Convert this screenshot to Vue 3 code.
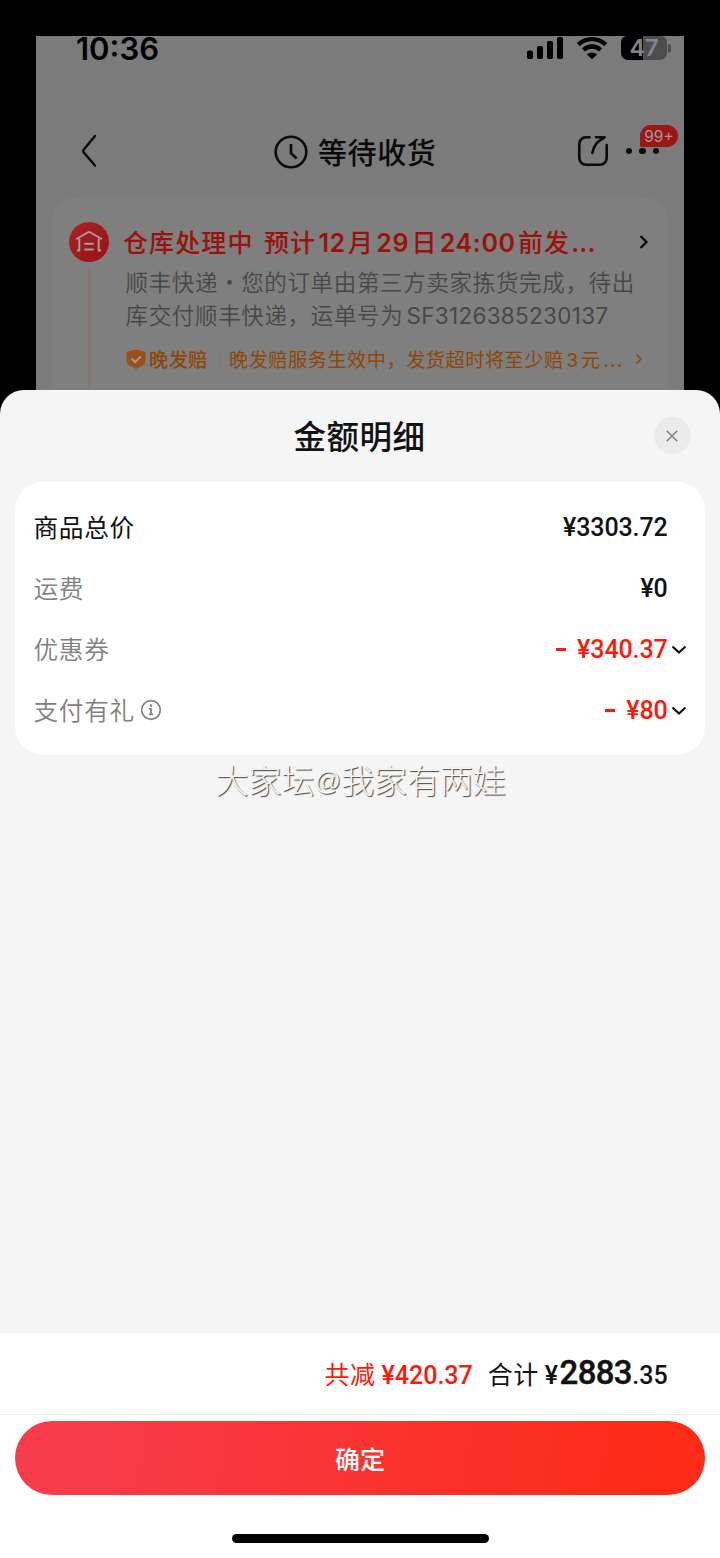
<script setup>
const rows = [
  { label: '商品总价', amount: '¥3303.72', strong: true },
  { label: '运费', amount: '¥0' },
  { label: '优惠券', amount: '¥340.37', minus: true },
  { label: '支付有礼', amount: '¥80', minus: true, info: true },
]
</script>

<template>
  <div class="screen">
    <section class="order">
      <div class="status">
        <span class="time">10:36</span>
        <svg class="signal" width="37" height="24" viewBox="0 0 37 24">
          <rect x="0" y="14.500" width="6" height="8.500" rx="1.800" />
          <rect x="10" y="10" width="6" height="13" rx="1.800" />
          <rect x="20" y="5" width="6" height="18" rx="1.800" />
          <rect x="30" y="1" width="6" height="22" rx="1.800" />
        </svg>
        <svg class="wifi" width="32" height="24" viewBox="0 0 32 24">
          <path d="M2.200 8.600a20 20 0 0 1 27.600 0" />
          <path d="M7.400 14a12.500 12.500 0 0 1 17.200 0" />
          <path class="fill" d="M16 23.200l-5.100-4.800a7.600 7.600 0 0 1 10.200 0z" />
        </svg>
        <div class="battery"><span>47</span></div>
        <i class="cap"></i>
      </div>

      <div class="nav">
        <svg class="back" width="18" height="34" viewBox="0 0 18 34">
          <path d="M15 2L3.600 15.800a2 2 0 0 0 0 2.400L15 31.500" />
        </svg>
        <svg class="clock" width="36" height="36" viewBox="0 0 36 36">
          <circle cx="18" cy="18" r="15.300" />
          <path d="M18 10v9.300l5.600 5.200" />
        </svg>
        <h1>等待收货</h1>
        <svg class="share" width="32" height="32" viewBox="0 0 32 32">
          <path d="M12.500 2.300H9a6.700 6.700 0 0 0-6.700 6.700v14A6.700 6.700 0 0 0 9 29.700h14a6.700 6.700 0 0 0 6.700-6.700V10" />
          <path d="M19 2.300h8.500C20.500 6.500 17 9.500 15.300 18" />
        </svg>
        <div class="more">
          <i></i><i></i><i></i>
          <b>99+</b>
        </div>
      </div>

      <div class="card">
        <div class="rail">
          <svg width="40" height="40" viewBox="0 0 40 40">
            <defs>
              <linearGradient id="disc" x1="0" y1="0" x2="1" y2="1">
                <stop offset="0" stop-color="#a8222a" />
                <stop offset="1" stop-color="#981411" />
              </linearGradient>
            </defs>
            <circle cx="20" cy="20" r="20" fill="url(#disc)" />
            <path d="M7 17.300L19 10.300q1-.6 2 0l12 7M8 28.500h2.300V16.500M32 28.500h-2.300V16.500M15.300 21.800h9.400M15.300 27.500h9.400" fill="none" stroke="#aa9c9c" stroke-width="1.900" />
          </svg>
          <i></i>
        </div>
        <div class="info">
          <div class="headline">
            <span class="state">仓库处理中</span>
            <span class="eta">预计<em>12</em>月<em>29</em>日<em>24:00</em>前发<em class="tail">...</em></span>
            <svg width="10" height="16" viewBox="0 0 10 16"><path d="M1.500 2l6 6-6 6" /></svg>
          </div>
          <p class="desc">顺丰快递<i class="dot">·</i>您的订单由第三方卖家拣货完成，待出<br>库交付顺丰快递，运单号为<em>SF3126385230137</em></p>
          <div class="promise">
            <svg width="20" height="20" viewBox="0 0 20 20">
              <path d="M10 .3l8.300 2.500q1.200.5 1.200 1.700V11q0 4-4.500 6.600L11 19.600q-1 .5-2 0l-4-2Q.5 15 .5 11V4.500q0-1.200 1.200-1.700z" fill="#985018" />
              <path d="M5.800 9.800l3.300 3.300 5.700-5.700" fill="none" stroke="#a69c92" stroke-width="2" />
            </svg>
            <strong>晚发赔</strong>
            <i></i>
            <span>晚发赔服务生效中，发货超时将至少赔<em>3</em>元<em class="tail">...</em></span>
            <svg class="go" width="8" height="12" viewBox="0 0 8 12"><path d="M1.500 1.500L6 6l-4.500 4.500" /></svg>
          </div>
        </div>
      </div>
    </section>

    <section class="sheet">
      <header>
        <h2>金额明细</h2>
        <button class="close" aria-label="关闭">
          <svg width="12" height="12" viewBox="0 0 12 12"><path d="M.7.7l10.600 10.600M11.300.7L.7 11.300" /></svg>
        </button>
      </header>

      <div class="panel">
        <div v-for="row in rows" :key="row.label" class="row" :class="{ strong: row.strong, minus: row.minus }">
          <span class="label">{{ row.label }}</span>
          <svg v-if="row.info" class="tip" width="22" height="22" viewBox="0 0 22 22">
            <circle cx="11" cy="11" r="9.300" />
            <path d="M9 9.800h2v5.500M8.900 15.400h4.300" />
            <circle class="fill" cx="11" cy="6.600" r="1.300" />
          </svg>
          <span class="amount"><i v-if="row.minus"></i>{{ row.amount }}</span>
          <span class="fold">
            <svg v-if="row.minus" width="16" height="10" viewBox="0 0 16 10"><path d="M1.500 1.500l6.500 6 6.500-6" /></svg>
          </span>
        </div>
      </div>

      <div class="watermark">大家坛<em>@</em>我家有两娃</div>

      <footer>
        <div class="total">
          <span class="cn saved">共减</span>
          <span class="num saved">¥420.37</span>
          <span class="cn sum">合计</span>
          <span class="num">¥<b>2883</b>.35</span>
        </div>
        <div class="action">
          <button class="confirm">确定</button>
          <div class="home"></div>
        </div>
      </footer>
    </section>
  </div>
</template>

<style>
body { margin: 0; background: #000; }
</style>

<style scoped>
.screen {
  width: 720px;
  height: 1558px;
  box-sizing: border-box;
  padding-top: 36px;
  background: #000;
  overflow: hidden;
  font-family: "Noto Sans CJK SC", sans-serif;
  display: flex;
  flex-direction: column;
}
svg { display: block; flex: none; }
em, i { font-style: normal; }
button { border: 0; padding: 0; font: inherit; }

.order {
  height: 353.500px;
  margin: 0 36px;
  background: #7b7b7b;
  flex: none;
}
.status { display: flex; align-items: flex-start; height: 81px; }
.time {
  width: 491px;
  box-sizing: border-box;
  padding-left: 40px;
  font: 600 31px/25px Inter, sans-serif;
}
.wifi { margin-left: 12px; fill: none; stroke: #000; stroke-width: 4.400; }
.wifi .fill { fill: #000; stroke: none; }
.battery {
  width: 46px;
  height: 24px;
  margin-left: 13px;
  border-radius: 6px 6px 7px 7px;
  background: linear-gradient(90deg, #000 47%, #4d4d4d 47%);
  color: #858585;
  text-align: center;
  font: 600 23.500px/24px Inter, sans-serif;
}
.cap { width: 3px; height: 9px; margin: 8px 0 0 1px; background: #4d4d4d; border-radius: 0 3px 3px 0; }

.nav { display: flex; align-items: center; height: 68px; }
.back { margin-left: 43.500px; fill: none; stroke: #0b0b0d; stroke-width: 2.500; stroke-linecap: round; }
.clock { margin: 2px 0 0 175.500px; fill: none; stroke: #0b0b0d; stroke-width: 2.600; }
.nav h1 { margin: 0 0 0 9px; width: 259px; font-size: 29px; font-weight: 500; letter-spacing: .6px; line-height: 40px; color: #0b0b0d; white-space: nowrap; }
.share { fill: none; stroke: #0b0b0d; stroke-width: 2.600; stroke-linejoin: round; stroke-linecap: round; }
.more { position: relative; display: flex; gap: 7px; margin-left: 17px; }
.more i { width: 6.300px; height: 6.300px; border-radius: 50%; background: #0b0b0d; }
.more b {
  position: absolute;
  left: 14px;
  top: -23px;
  width: 38px;
  height: 22px;
  border-radius: 11px 11px 11px 2px;
  background: #9c1713;
  color: #a39a9a;
  font: 400 15.500px/23px Inter, sans-serif;
  text-align: center;
}

.card {
  display: flex;
  margin: 12px 16px 0;
  height: 192.500px;
  border-radius: 24px 24px 0 0;
  background: #7f7f7f;
}
.rail { width: 40px; margin: 25px 0 0 17px; display: flex; flex-direction: column; align-items: center; gap: 7px; }
.rail i { width: 1.500px; flex: 1; background: #8b736d; }
.info { margin: 28px 0 0 14px; flex: 1; white-space: nowrap; }
.headline { display: flex; align-items: center; height: 34px; margin-top: -1px; color: #9a120c; font-size: 25px; font-weight: 500; letter-spacing: 1.100px; }
.state { width: 141px; }
.eta { width: 375px; }
.eta em { font: 600 25px Inter, sans-serif; letter-spacing: .65px; margin: 0 2.200px; }
.eta .tail { letter-spacing: .2px; margin: 0 0 0 1px; }
.headline svg { margin-top: 1px; fill: none; stroke: #0b0b0d; stroke-width: 2.300; }
.desc { margin: 7px 0 0 2.500px; font-size: 22.500px; line-height: 33px; letter-spacing: .66px; color: #474747; font-weight: 350; }
.desc em { font: 400 22.500px Inter, sans-serif; margin-left: 3px; letter-spacing: .3px; }
.dot { display: inline-block; width: 23px; text-align: center; }
.promise { display: flex; align-items: center; height: 30px; margin: 12.500px 0 0 3px; color: #8c4609; font-size: 19.200px; letter-spacing: .5px; }
.promise strong { font-weight: 500; margin-left: 3px; width: 70px; }
.promise i { width: 1px; height: 13px; background: #8a745f; }
.promise span { margin-left: 9px; width: 406px; }
.promise em { font-family: Inter, sans-serif; margin: 0 2.500px; }
.promise .tail { letter-spacing: 1.200px; }
.go { fill: none; stroke: #8c4609; stroke-width: 1.500; }

.sheet { flex: 1; display: flex; flex-direction: column; background: #f5f5f5; border-radius: 24px 24px 0 0; overflow: hidden; }
header { display: flex; align-items: center; height: 92.500px; flex: none; }
h2 { margin: -2px 0 0 293.500px; width: 360px; font-size: 32.500px; font-weight: 500; letter-spacing: .5px; line-height: 48px; color: #111214; }
.close { width: 37px; height: 37px; border-radius: 50%; background: #ebebeb; display: flex; align-items: center; justify-content: center; }
.close svg { fill: none; stroke: #777; stroke-width: 1.300; }

.panel { margin: 0 15px; height: 273px; box-sizing: border-box; padding: 15px 0 0 18.500px; border-radius: 28px; background: #fff; flex: none; }
.row { display: flex; align-items: center; height: 61px; }
.label { margin-top: -4px; font-size: 24.700px; letter-spacing: .65px; line-height: 36px; color: #808080; font-weight: 350; }
.strong .label { color: #111214; font-weight: 400; }
.tip { margin: -1px 0 0 5px; fill: none; stroke: #808080; stroke-width: 1.700; }
.tip .fill { fill: #808080; stroke: none; }
.amount { margin-left: auto; display: flex; align-items: center; color: #111214; font: 500 25px/30px Roboto, sans-serif; letter-spacing: -.1px; margin-right: -.7px; }
.minus .amount { color: #fb1a0c; }
.amount i { width: 10px; height: 2.400px; margin-right: 11px; background: #fb1a0c; }
.fold { width: 38px; display: flex; }
.fold svg { margin-left: 4px; fill: none; stroke: #111214; stroke-width: 2.200; }

.watermark {
  margin: 0 0 0 215.500px;
  font-size: 33px;
  line-height: 48px;
  font-weight: 300;
  color: #f5f5f5;
  text-shadow: 1px 1px 1px #444;
  white-space: nowrap;
}
.watermark em { display: inline-block; font-family: "Liberation Sans", sans-serif; font-size: 26px; transform: translateY(-3px); }

footer { margin-top: auto; height: 225px; background: #fff; flex: none; }
.total { display: flex; align-items: baseline; height: 82px; box-sizing: border-box; padding-left: 324.500px; border-bottom: 1px solid #ebebeb; white-space: nowrap; color: #111214; }
.cn { font-size: 25px; letter-spacing: .5px; line-height: 80px; }
.num { margin-left: 6px; font: 500 25px/30px Roboto, sans-serif; }
.num b { font-size: 33px; font-weight: 500; letter-spacing: -.7px; margin: 0 .5px 0 1.500px; -webkit-text-stroke: .4px; }
.saved { color: #fb1a0c; }
.sum { margin-left: 15px; }
.action { display: flex; flex-direction: column; align-items: center; padding-top: 6px; }
.confirm { width: 690px; height: 74px; border-radius: 37px; background: linear-gradient(100deg, #f83c4c 8%, #fb2b18 92%); color: #fff; font-size: 25px; font-weight: 500; line-height: 72px; }
.home { width: 257px; height: 9px; margin-top: 39px; border-radius: 5px; background: #000; }
</style>
